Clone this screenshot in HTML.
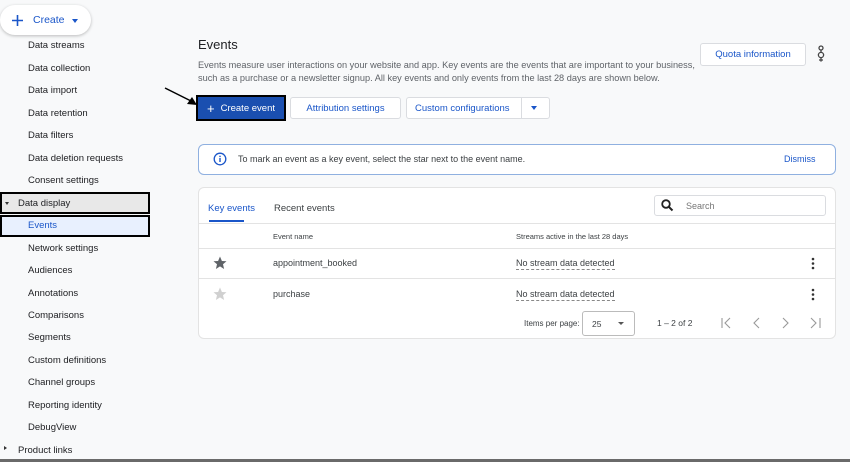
<!DOCTYPE html>
<html><head><meta charset="utf-8"><style>
*{margin:0;padding:0;box-sizing:border-box}
body{width:850px;height:462px;overflow:hidden;background:#f8f9fa;font-family:"Liberation Sans",Arial,sans-serif;position:relative;color:#202124}
.a{position:absolute}
.nav{position:absolute;left:28px;font-size:9.5px;color:#202124;line-height:12px}
.btn{position:absolute;background:#fff;border:1px solid #dadce0;border-radius:3px;color:#1a56c9;font-size:9.5px;display:flex;align-items:center;justify-content:center}
.t{font-size:9px;color:#3c4043}
.line{position:absolute;left:198px;width:638px;height:1px;background:#e3e3e3}
</style></head><body>
<div class="a" style="left:0;top:5px;width:91px;height:30px;background:#fff;border-radius:16px;box-shadow:0 1px 3px rgba(0,0,0,.25)"></div>
<svg class="a" style="left:11px;top:14px" width="13" height="13"><path d="M6.5 1v11M1 6.5h11" stroke="#1a56c9" stroke-width="1.6"/></svg>
<div class="a" style="left:33px;top:14px;font-size:10.5px;color:#1a56c9">Create</div>
<div class="a" style="left:72px;top:19px;width:0;height:0;border-left:3.5px solid transparent;border-right:3.5px solid transparent;border-top:4px solid #1a56c9"></div>

<div class="nav" style="top:40px">Data streams</div>
<div class="nav" style="top:63px">Data collection</div>
<div class="nav" style="top:85px">Data import</div>
<div class="nav" style="top:108px">Data retention</div>
<div class="nav" style="top:130px">Data filters</div>
<div class="nav" style="top:153px">Data deletion requests</div>
<div class="nav" style="top:175px">Consent settings</div>
<div class="a" style="left:0;top:192px;width:150px;height:22px;background:#e8e8e8;border:2px solid #000"></div>
<div class="a" style="left:5px;top:202px;width:0;height:0;border-left:2px solid transparent;border-right:2px solid transparent;border-top:3px solid #333"></div>
<div class="nav" style="top:198px;left:18px">Data display</div>
<div class="a" style="left:0;top:215px;width:150px;height:22px;background:#e8f0fe;border:2px solid #000"></div>
<div class="nav" style="top:220px;color:#1a56c9">Events</div>
<div class="nav" style="top:243px">Network settings</div>
<div class="nav" style="top:265px">Audiences</div>
<div class="nav" style="top:288px">Annotations</div>
<div class="nav" style="top:310px">Comparisons</div>
<div class="nav" style="top:332px">Segments</div>
<div class="nav" style="top:355px">Custom definitions</div>
<div class="nav" style="top:377px">Channel groups</div>
<div class="nav" style="top:400px">Reporting identity</div>
<div class="nav" style="top:422px">DebugView</div>
<div class="a" style="left:4px;top:446px;width:0;height:0;border-top:2.5px solid transparent;border-bottom:2.5px solid transparent;border-left:3px solid #333"></div>
<div class="nav" style="top:445px;left:18px">Product links</div>
<div class="a" style="left:0;top:459px;width:850px;height:3px;background:#6a6a6a"></div>

<div class="a" style="left:198px;top:37px;font-size:13px;color:#202124">Events</div>
<div class="a" style="left:198px;top:59px;font-size:9.2px;color:#5f6368;line-height:12.5px;width:520px;white-space:nowrap">Events measure user interactions on your website and app. Key events are the events that are important to your business,<br>such as a purchase or a newsletter signup. All key events and only events from the last 28 days are shown below.</div>
<div class="btn" style="left:700px;top:43px;width:106px;height:23px">Quota information</div>
<svg class="a" style="left:816px;top:45px" width="10" height="18"><circle cx="5" cy="3" r="2" fill="none" stroke="#444" stroke-width="1.3"/><circle cx="5" cy="10" r="2.6" fill="none" stroke="#444" stroke-width="1.3"/><path d="M5 5v2.4M5 12.6v4M3 15h4" stroke="#444" stroke-width="1.3"/></svg>

<svg class="a" style="left:163px;top:86px" width="36" height="22"><line x1="2" y1="2" x2="30" y2="16" stroke="#000" stroke-width="1.5"/><polygon points="34,19 24,18 29,11" fill="#000"/></svg>
<div class="a" style="left:196px;top:95px;width:90px;height:26px;background:#1a4fb0;border:2px solid #000;color:#fff;font-size:9.5px;display:flex;align-items:center;padding-left:9px"><span style="font-size:13px;margin-right:6px">+</span>Create event</div>
<div class="btn" style="left:290px;top:97px;width:111px;height:22px">Attribution settings</div>
<div class="btn" style="left:406px;top:97px;width:144px;height:22px;justify-content:flex-start;padding-left:8px">Custom configurations</div>
<div class="a" style="left:521px;top:97px;width:1px;height:22px;background:#dadce0"></div>
<div class="a" style="left:531px;top:106px;border-left:3.5px solid transparent;border-right:3.5px solid transparent;border-top:4px solid #1a56c9"></div>

<div class="a" style="left:198px;top:144px;width:638px;height:31px;background:#fff;border:1px solid #8fb0e0;border-radius:6px"></div>
<svg class="a" style="left:213px;top:152px" width="14" height="14"><circle cx="7" cy="7" r="5.8" fill="none" stroke="#1a56c9" stroke-width="1.3"/><rect x="6.3" y="6" width="1.4" height="4" fill="#1a56c9"/><rect x="6.3" y="3.7" width="1.4" height="1.4" fill="#1a56c9"/></svg>
<div class="a" style="left:238px;top:154px;font-size:9px;color:#3c4043">To mark an event as a key event, select the star next to the event name.</div>
<div class="a" style="left:784px;top:154px;font-size:9px;color:#1a56c9">Dismiss</div>

<div class="a" style="left:198px;top:187px;width:638px;height:152px;background:#fff;border:1px solid #e3e3e3;border-radius:6px"></div>
<div class="a" style="left:208px;top:203px;font-size:9.5px;color:#1a56c9">Key events</div>
<div class="a" style="left:209px;top:220px;width:35px;height:2px;background:#1a56c9"></div>
<div class="a" style="left:274px;top:203px;font-size:9.5px;color:#3c4043">Recent events</div>
<div class="a" style="left:654px;top:195px;width:172px;height:21px;border:1px solid #dadce0;border-radius:3px;background:#fff"></div>
<svg class="a" style="left:661px;top:199px" width="13" height="13"><circle cx="5" cy="5" r="3.8" fill="none" stroke="#222" stroke-width="1.8"/><line x1="7.8" y1="7.8" x2="11.5" y2="11.5" stroke="#222" stroke-width="2"/></svg>
<div class="a" style="left:686px;top:201px;font-size:9px;color:#777">Search</div>
<div class="line" style="top:223px"></div>
<div class="a t" style="left:273px;top:232px;font-size:7.5px">Event name</div>
<div class="a t" style="left:516px;top:232px;font-size:7.5px">Streams active in the last 28 days</div>
<div class="line" style="top:248px"></div>
<svg class="a" style="left:213px;top:256px" width="14" height="14"><polygon points="7,0.5 8.9,5 13.5,5.3 10,8.3 11.1,13 7,10.4 2.9,13 4,8.3 0.5,5.3 5.1,5" fill="#5f6368"/></svg>
<div class="a t" style="left:273px;top:258px">appointment_booked</div>
<div class="a t" style="left:516px;top:258px;border-bottom:1px dashed #888;padding-bottom:1px">No stream data detected</div>
<svg class="a" style="left:811px;top:257px" width="4" height="13"><circle cx="2" cy="2" r="1.3" fill="#333"/><circle cx="2" cy="6.5" r="1.3" fill="#333"/><circle cx="2" cy="11" r="1.3" fill="#333"/></svg>
<div class="line" style="top:278px"></div>
<svg class="a" style="left:213px;top:287px" width="14" height="14"><polygon points="7,0.5 8.9,5 13.5,5.3 10,8.3 11.1,13 7,10.4 2.9,13 4,8.3 0.5,5.3 5.1,5" fill="#d0d0d0"/></svg>
<div class="a t" style="left:273px;top:289px">purchase</div>
<div class="a t" style="left:516px;top:289px;border-bottom:1px dashed #888;padding-bottom:1px">No stream data detected</div>
<svg class="a" style="left:811px;top:288px" width="4" height="13"><circle cx="2" cy="2" r="1.3" fill="#333"/><circle cx="2" cy="6.5" r="1.3" fill="#333"/><circle cx="2" cy="11" r="1.3" fill="#333"/></svg>
<div class="a t" style="left:524px;top:319px;font-size:8px">Items per page:</div>
<div class="a" style="left:582px;top:311px;width:53px;height:25px;border:1px solid #bbb;border-radius:3px"></div>
<div class="a t" style="left:592px;top:319px;font-size:8.5px">25</div>
<div class="a" style="left:618px;top:322px;border-left:3px solid transparent;border-right:3px solid transparent;border-top:3.5px solid #555"></div>
<div class="a t" style="left:657px;top:318px;font-size:8.5px">1 – 2 of 2</div>
<svg class="a" style="left:718px;top:316px" width="110" height="14"><g fill="none" stroke="#999" stroke-width="1.1"><path d="M4 2v10M12 2l-5 5 5 5"/><path d="M41 2l-5 5 5 5"/><path d="M65 2l5 5-5 5"/><path d="M93 2l5 5-5 5M102 2v10"/></g></svg>
</body></html>
